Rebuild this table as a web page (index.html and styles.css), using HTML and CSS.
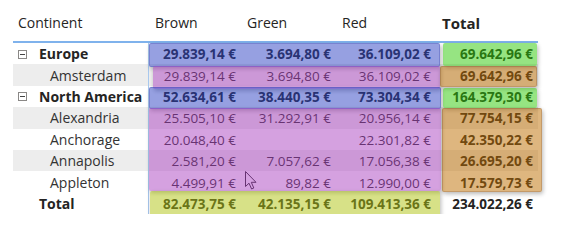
FILE: index.html
```html
<!DOCTYPE html>
<html>
<head>
<meta charset="utf-8">
<link rel="stylesheet" href="styles.css">
</head>
<body>
<div class="matrix">
  <div class="row head">
    <div class="rh">Continent</div>
    <div class="ch">Brown</div>
    <div class="ch">Green</div>
    <div class="ch">Red</div>
    <div class="ch bold">Total</div>
  </div>
  <div class="row group">
    <div class="rh"><span class="exp"></span>Europe</div>
    <div class="v">29.839,14 €</div>
    <div class="v">3.694,80 €</div>
    <div class="v">36.109,02 €</div>
    <div class="v">69.642,96 €</div>
  </div>
  <div class="row child alt">
    <div class="rh">Amsterdam</div>
    <div class="v">29.839,14 €</div>
    <div class="v">3.694,80 €</div>
    <div class="v">36.109,02 €</div>
    <div class="v t">69.642,96 €</div>
  </div>
  <div class="row group">
    <div class="rh"><span class="exp"></span>North America</div>
    <div class="v">52.634,61 €</div>
    <div class="v">38.440,35 €</div>
    <div class="v">73.304,34 €</div>
    <div class="v">164.379,30 €</div>
  </div>
  <div class="row child alt">
    <div class="rh">Alexandria</div>
    <div class="v">25.505,10 €</div>
    <div class="v">31.292,91 €</div>
    <div class="v">20.956,14 €</div>
    <div class="v t">77.754,15 €</div>
  </div>
  <div class="row child">
    <div class="rh">Anchorage</div>
    <div class="v">20.048,40 €</div>
    <div class="v"></div>
    <div class="v">22.301,82 €</div>
    <div class="v t">42.350,22 €</div>
  </div>
  <div class="row child alt">
    <div class="rh">Annapolis</div>
    <div class="v">2.581,20 €</div>
    <div class="v">7.057,62 €</div>
    <div class="v">17.056,38 €</div>
    <div class="v t">26.695,20 €</div>
  </div>
  <div class="row child">
    <div class="rh">Appleton</div>
    <div class="v">4.499,91 €</div>
    <div class="v">89,82 €</div>
    <div class="v">12.990,00 €</div>
    <div class="v t">17.579,73 €</div>
  </div>
  <div class="row total">
    <div class="rh">Total</div>
    <div class="v">82.473,75 €</div>
    <div class="v">42.135,15 €</div>
    <div class="v">109.413,36 €</div>
    <div class="v">234.022,26 €</div>
  </div>

  <svg class="cursor" width="13" height="19" viewBox="0 0 13 19">
    <path d="M0.5 0.5 L0.5 15.5 L4 12.2 L6.6 18 L8.8 17 L6.3 11.3 L11 11.3 Z" fill="#fff" stroke="#222" stroke-width="1" stroke-linejoin="round"/>
  </svg>

  <div class="ov blue blue-eu"></div>
  <div class="ov purple purple-ams"></div>
  <div class="ov blue blue-na"></div>
  <div class="ov purple purple-cities"></div>
  <div class="ov yellow yellow-tot"></div>
  <div class="ov green green-eu"></div>
  <div class="ov orange orange-ams"></div>
  <div class="ov green green-na"></div>
  <div class="ov orange orange-cities"></div>
</div>
</body>
</html>
```

FILE: styles.css
```css
html, body {
  margin: 0;
  padding: 0;
  background: #ffffff;
}

body {
  font-family: "Open Sans", "Noto Sans", sans-serif;
  color: #252423;
}

.matrix {
  position: relative;
  margin-left: 13px;
  width: 525px;
}

.row {
  display: grid;
  grid-template-columns: 136px 92px 95px 100px 102px;
  height: 21.4px;
  align-items: center;
  font-size: 13.5px;
  line-height: 18px;
  white-space: nowrap;
}

.row > div {
  height: 100%;
  display: flex;
  align-items: center;
  padding-top: 1px;
  box-sizing: border-box;
}

.row.head {
  height: 43px;
  border-bottom: 2px solid #7fb2ec;
  box-sizing: border-box;
  font-size: 14px;
}

.row.head > div {
  padding-top: 4px;
}

.row.head .rh {
  padding-left: 5px;
}

.ch {
  padding-left: 6px;
}

.ch.bold {
  font-weight: 700;
  font-size: 15px;
}

.row:not(.head) .rh {
  border-right: 1px solid #a8c8ee;
  font-size: 14px;
}

.group .rh {
  font-weight: 700;
  padding-left: 5px;
}

.child .rh {
  padding-left: 37px;
  color: #333333;
}

.total .rh {
  font-weight: 700;
  padding-left: 26px;
}

.alt {
  background: #ededed;
}

.v {
  justify-content: flex-end;
  padding-right: 5px;
}

.group .v,
.total .v,
.v.t {
  font-weight: 700;
}

.exp {
  width: 9px;
  height: 9px;
  border: 1px solid #8a8886;
  box-sizing: border-box;
  margin-right: 12px;
  position: relative;
  flex: none;
}

.exp::after {
  content: "";
  position: absolute;
  left: 1px;
  right: 1px;
  top: 3px;
  height: 1px;
  background: #444;
}

.cursor {
  position: absolute;
  left: 232px;
  top: 171px;
}

.ov {
  position: absolute;
  box-sizing: border-box;
  border-radius: 2px;
  box-shadow: 1px 2px 4px rgba(0, 0, 0, 0.28);
}

.blue {
  background: rgba(45, 65, 195, 0.5);
  border: 1px solid rgba(50, 60, 170, 0.3);
}

.purple {
  background: rgba(171, 67, 193, 0.5);
}

.yellow {
  background: rgba(175, 195, 15, 0.5);
}

.green {
  background: rgba(45, 201, 5, 0.5);
}

.orange {
  background: rgba(189, 109, 0, 0.5);
  border: 1px solid rgba(120, 70, 40, 0.25);
}

.blue-eu { left: 136px; top: 43px; width: 291px; height: 24px; }
.purple-ams { left: 140px; top: 66px; width: 287px; height: 23px; }
.blue-na { left: 136px; top: 87px; width: 292px; height: 22px; }
.purple-cities { left: 136px; top: 108px; width: 292px; height: 83px; }
.yellow-tot { left: 137px; top: 191px; width: 290px; height: 27px; }
.green-eu { left: 430px; top: 43px; width: 94px; height: 23px; }
.orange-ams { left: 427px; top: 66px; width: 97px; height: 21px; }
.green-na { left: 430px; top: 88px; width: 94px; height: 20px; }
.orange-cities { left: 429px; top: 108px; width: 100px; height: 84px; }
```
